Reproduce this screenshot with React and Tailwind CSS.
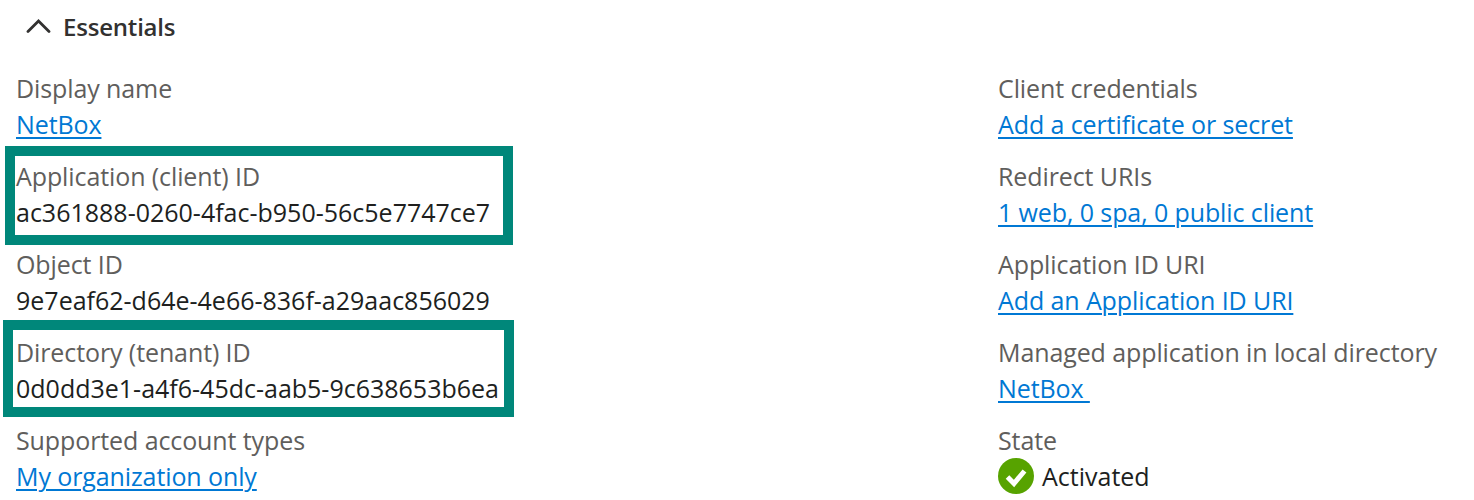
const leftFields = [
  { label: "Display name", value: "NetBox", link: true },
  { label: "Application (client) ID", value: "ac361888-0260-4fac-b950-56c5e7747ce7", box: "-left-[11px] -top-[12px] w-[508px] h-[99px]" },
  { label: "Object ID", value: "9e7eaf62-d64e-4e66-836f-a29aac856029" },
  { label: "Directory (tenant) ID", value: "0d0dd3e1-a4f6-45dc-aab5-9c638653b6ea", box: "-left-[13px] -top-[14px] w-[511px] h-[97px]" },
  { label: "Supported account types", value: "My organization only", link: true },
];

const rightFields = [
  { label: "Client credentials", value: "Add a certificate or secret", link: true },
  { label: "Redirect URIs", value: "1 web, 0 spa, 0 public client", link: true },
  { label: "Application ID URI", value: "Add an Application ID URI", link: true },
  { label: "Managed application in local directory", value: "NetBox\u00a0", link: true },
  { label: "State", value: "Activated", status: true },
];

function Field({ label, value, link, box, status }) {
  return (
    <div className="relative h-[88px] text-[25px] leading-[36px] whitespace-nowrap">
      {box && <div className={`absolute border-[10px] border-[#00877a] ${box}`} />}
      <div className="text-[#605e5c] tracking-[-0.1px]">{label}</div>
      {link ? (
        <a className="text-[#0078d4] tracking-[-0.1px] underline underline-offset-[3px] decoration-2" href="#">
          {value}
        </a>
      ) : status ? (
        <div className="flex items-center gap-[8px] text-[#201f1e]">
          <svg width="36" height="36" viewBox="0 0 36 36">
            <circle cx="18" cy="18" r="18" fill="#57a300" />
            <path d="M9.5 19l6.5 6.5L26.5 13" fill="none" stroke="#fff" strokeWidth="5" />
          </svg>
          {value}
        </div>
      ) : (
        <div className="text-[#201f1e]">{value}</div>
      )}
    </div>
  );
}

export default function App() {
  return (
    <div className="h-[500px] overflow-hidden bg-white font-['Open_Sans','Noto_Sans',sans-serif]">
      <div className="flex items-center h-[54px] pl-[26px] gap-[12px] text-[24px] tracking-[-0.2px] font-semibold text-[#323130]">
        <svg className="mb-[4px]" width="25" height="15" viewBox="0 0 25 15">
          <path d="M2 13.5L12.5 3 23 13.5" fill="none" stroke="#323130" strokeWidth="2.8" strokeLinecap="round" />
        </svg>
        Essentials
      </div>
      <div className="grid grid-cols-[982px_1fr] pl-[16px] pt-[16px]">
        <div>
          {leftFields.map((f) => (
            <Field key={f.label} {...f} />
          ))}
        </div>
        <div>
          {rightFields.map((f) => (
            <Field key={f.label} {...f} />
          ))}
        </div>
      </div>
    </div>
  );
}
